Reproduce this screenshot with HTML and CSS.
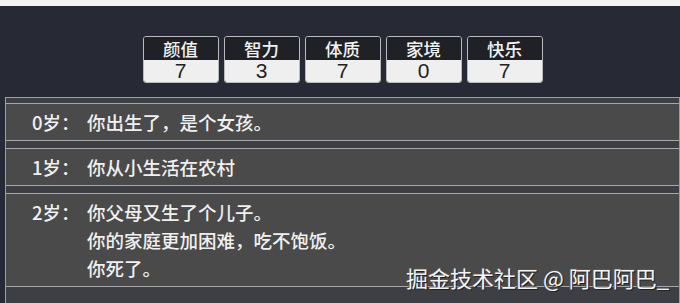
FILE: index.html
```html
<!DOCTYPE html>
<html lang="zh-CN">
<head>
<meta charset="utf-8">
<link rel="stylesheet" href="styles.css">
</head>
<body>
<div class="topbar"></div>
<div class="stats">
  <div class="card"><div class="card-name">颜值</div><div class="card-value">7</div></div>
  <div class="card"><div class="card-name">智力</div><div class="card-value">3</div></div>
  <div class="card"><div class="card-name">体质</div><div class="card-value">7</div></div>
  <div class="card"><div class="card-name">家境</div><div class="card-value">0</div></div>
  <div class="card"><div class="card-name">快乐</div><div class="card-value">7</div></div>
</div>
<div class="list">
  <div class="item"><span class="age">0岁：</span><div class="text">你出生了，是个女孩。</div></div>
  <div class="item"><span class="age">1岁：</span><div class="text">你从小生活在农村</div></div>
  <div class="item"><span class="age">2岁：</span><div class="text">你父母又生了个儿子。<br>你的家庭更加困难，吃不饱饭。<br>你死了。</div></div>
</div>
<div class="watermark">掘金技术社区 @ 阿巴阿巴_</div>
</body>
</html>
```

FILE: styles.css
```css
html, body {
  margin: 0;
  padding: 0;
  height: 100%;
  overflow: hidden;
}
body {
  background: #272a35;
  font-family: "Noto Sans CJK SC", "Noto Sans", sans-serif;
  position: relative;
  display: flex;
  flex-direction: column;
}
.topbar {
  height: 6px;
  flex: none;
  background: #f3f3f3;
}
.stats {
  display: flex;
  flex: none;
  justify-content: center;
  gap: 5px;
  padding: 30px 0 0 0;
  margin-left: 5px;
  height: 47px;
  margin-bottom: 14px;
}
.card {
  width: 74px;
  border: 1px solid #b9babd;
  border-radius: 3px;
  overflow: hidden;
  display: flex;
  flex-direction: column;
}
.card-name {
  height: 23px;
  background: #1f2127;
  color: #f2f2f2;
  font-size: 17.5px;
  line-height: 23px;
  text-align: center;
  font-weight: 500;
}
.card-value {
  flex: 1;
  background: #efefef;
  color: #222;
  font-family: "Liberation Sans", Arial, sans-serif;
  font-size: 21px;
  line-height: 22px;
  text-align: center;
}
.list {
  flex: 1;
  min-height: 0;
  overflow: hidden;
  margin-left: 5px;
  border: 1px solid #9c9ea2;
  border-bottom: none;
  background: #3d3f45;
  padding-top: 5px;
  display: flex;
  flex-direction: column;
  gap: 7px;
}
.item {
  display: flex;
  flex: none;
  background: #4a4a4a;
  border-top: 1px solid #a6a7a9;
  border-bottom: 1px solid #a6a7a9;
  padding: 4px 0 4px 26px;
  color: #f0f0f0;
  font-size: 18.5px;
  line-height: 28px;
  font-weight: 500;
}
.age {
  width: 55px;
  flex: none;
}
.watermark {
  position: absolute;
  right: 11px;
  top: 262px;
  color: #f4f4f4;
  font-size: 22px;
  line-height: 30px;
  text-shadow: 1px 1px 0 #222, -1px 0 0 #555, 0 -1px 0 #555;
}
```
